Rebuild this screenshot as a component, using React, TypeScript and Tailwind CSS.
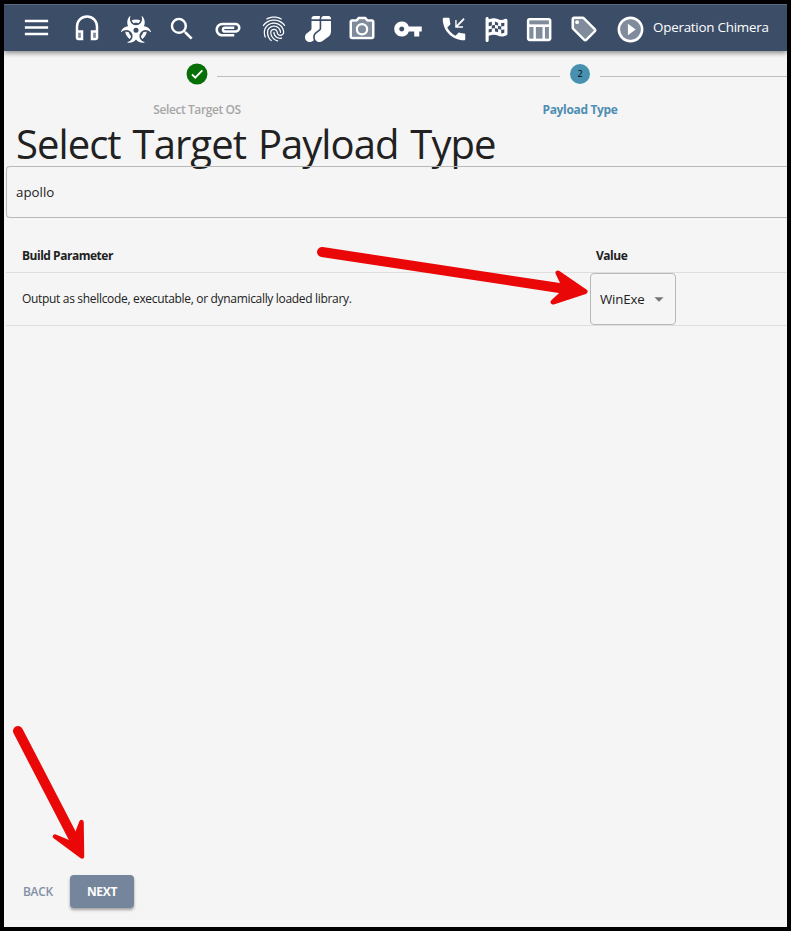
import type { ReactNode } from "react";
import { MdMenu, MdSearch, MdAttachment, MdFingerprint, MdVpnKey, MdArrowDropDown } from "react-icons/md";
import { FaBiohazard, FaSocks, FaFlagCheckered } from "react-icons/fa6";

function TwoTone({ size = 30, className, children }: { size?: number; className?: string; children: ReactNode }) {
  return (
    <svg width={size} height={size} viewBox="0 0 24 24" fill="currentColor" className={`shrink-0 ${className ?? ""}`}>
      {children}
    </svg>
  );
}

function TopBar() {
  return (
    <header className="relative z-10 flex h-[47px] shrink-0 items-center border-t border-[#5c6a80] bg-[#3c4d68] text-white shadow-[0_2px_5px_rgba(0,0,0,0.45)]">
      <MdMenu size={31} className="-mt-[2px] ml-[17px] shrink-0" />
      <TwoTone className="mt-[2px] ml-[20px]">
        <path opacity=".35" d="M5 15h2v4H5zm12 0h2v4h-2z" />
        <path d="M12 1a9 9 0 0 0-9 9v9c0 1.1.9 2 2 2h4v-8H5v-3a7 7 0 0 1 14 0v3h-4v8h4c1.1 0 2-.9 2-2v-9a9 9 0 0 0-9-9zM7 15v4H5v-4h2zm12 4h-2v-4h2v4z" />
      </TwoTone>
      <FaBiohazard className="mt-[2px] ml-[19px] h-[27px] w-[30px] shrink-0" />
      <MdSearch size={30} className="mt-[1px] ml-[16px] shrink-0" />
      <MdAttachment size={30} className="mt-[2px] ml-[16px] shrink-0" />
      <MdFingerprint size={30} className="mt-[2px] ml-[16px] shrink-0" />
      <FaSocks size={26} className="mt-[2px] ml-[16px] shrink-0" />
      <TwoTone className="ml-[16px]">
        <path opacity=".35" d="M4 7h4.05l1.83-2h4.24l1.83 2H20v12H4z" />
        <path d="M20 5h-3.17L15 3H9L7.17 5H4c-1.1 0-2 .9-2 2v12c0 1.1.9 2 2 2h16c1.1 0 2-.9 2-2V7c0-1.1-.9-2-2-2zm0 14H4V7h4.05l1.83-2h4.24l1.83 2H20v12zM12 8a5 5 0 1 0 0 10 5 5 0 0 0 0-10zm0 8.2a3.2 3.2 0 1 1 0-6.4 3.2 3.2 0 0 1 0 6.4z" />
      </TwoTone>
      <MdVpnKey size={30} className="mt-[2px] ml-[16px] shrink-0" />
      <TwoTone className="mt-[2px] ml-[16px]">
        <path d="M20 15.5c-1.25 0-2.45-.2-3.57-.57-.35-.11-.74-.03-1.02.24l-2.2 2.2a15.05 15.05 0 0 1-6.59-6.59l2.2-2.21c.28-.26.36-.65.25-1C8.7 6.45 8.5 5.25 8.5 4c0-.55-.45-1-1-1H4c-.55 0-1 .45-1 1 0 9.39 7.61 17 17 17 .55 0 1-.45 1-1v-3.5c0-.55-.45-1-1-1z" />
        <path d="M19.6 3.2l-5.500 5.500V4.700h-1.100v6.200H19.200v-1.100h-4l5.300-5.500z" />
      </TwoTone>
      <FaFlagCheckered size={25} className="mt-[2px] ml-[15px] shrink-0" />
      <TwoTone size={31} className="mt-[2px] ml-[14px]">
        <path opacity=".35" d="M5 10h3v9H5zm5 0h5v9h-5zm7 0h3v9h-3zM5 5h15v3H5z" />
        <path d="M20 3H5c-1.1 0-2 .9-2 2v14c0 1.1.9 2 2 2h15c1.1 0 2-.9 2-2V5c0-1.1-.9-2-2-2zm0 2v3H5V5h15zm-5 14h-5v-9h5v9zM5 10h3v9H5v-9zm12 9v-9h3v9h-3z" />
      </TwoTone>
      <TwoTone className="mt-[2px] ml-[15px]">
        <path opacity=".35" d="M11 4H4v7l9 9.01L20 13z" />
        <path d="M21.41 11.58l-9-9C12.05 2.22 11.55 2 11 2H4c-1.1 0-2 .9-2 2v7c0 .55.22 1.05.59 1.42l9 9c.36.36.86.58 1.41.58s1.05-.22 1.41-.59l7-7c.37-.36.59-.86.59-1.41s-.23-1.06-.59-1.42zM13 20.01L4 11V4h7v-.01l9 9-7 7.02z" />
        <circle cx="6.5" cy="6.5" r="1.5" />
      </TwoTone>
      <TwoTone size={31} className="mt-[2px] ml-[16px]">
        <circle opacity=".35" cx="12" cy="12" r="8" />
        <path d="M12 2a10 10 0 1 0 0 20 10 10 0 0 0 0-20zm0 18a8 8 0 1 1 0-16 8 8 0 0 1 0 16zM10 16.5l6-4.5-6-4.5z" />
      </TwoTone>
      <span className="-mt-[1px] ml-[7px] text-[13.4px] tracking-[-0.24px] whitespace-nowrap">Operation Chimera</span>
    </header>
  );
}

function Stepper() {
  return (
    <div className="mt-[12px] flex h-[56px] shrink-0">
      <div className="flex w-[386px] shrink-0 flex-col items-center">
        <div className="flex h-[22px] w-full shrink-0 items-center">
          <svg viewBox="0 0 24 24" className="ml-[182px] h-[22px] w-[22px] shrink-0">
            <circle cx="12" cy="12" r="11.4" fill="#067006" />
            <path d="M6.5 12.3l3.6 3.6 7.7-7.8" fill="none" stroke="#fff" strokeWidth="2" />
          </svg>
          <div className="mt-[5px] ml-[9px] h-px flex-1 bg-[#bdbdbd]" />
        </div>
        <span className="mt-[16px] text-[12px] leading-[18px] font-semibold tracking-[-0.42px] text-[#a6a6a6]">Select Target OS</span>
      </div>
      <div className="flex w-[397px] shrink-0 flex-col">
        <div className="flex h-[22px] w-full shrink-0 items-center">
          <div className="mt-[5px] h-px w-[170px] bg-[#bdbdbd]" />
          <div className="ml-[10px] flex h-[20px] w-[20px] items-center justify-center rounded-full bg-[#4790b0] text-[9px] text-black">2</div>
          <div className="mt-[5px] ml-[10px] h-px flex-1 bg-[#bdbdbd]" />
        </div>
        <span className="mt-[16px] w-[380px] text-center text-[12px] leading-[18px] font-bold tracking-[-0.35px] text-[#4f8db3]">Payload Type</span>
      </div>
    </div>
  );
}

function Arrows() {
  return (
    <svg className="pointer-events-none absolute inset-0 z-20 h-[931px] w-[791px]" viewBox="0 0 791 931" fill="#ea0707" stroke="#ea0707" strokeLinecap="round" strokeLinejoin="round">
      <path d="M322 252L566 289" strokeWidth="10" fill="none" />
      <path d="M558 273L585 291.500L553 302L566 290Z" strokeWidth="5" />
      <path d="M18 731L75 841" strokeWidth="10" fill="none" />
      <path d="M81.500 822L82 856.500L55 836.500L73 844Z" strokeWidth="4.500" />
    </svg>
  );
}

export default function App() {
  return (
    <div className="relative flex h-[931px] w-[791px] flex-col overflow-hidden border-4 border-black bg-[#f5f5f5] font-['Open_Sans','Noto_Sans',sans-serif] text-[#212121]">
      <TopBar />
      <Stepper />
      <h1 className="ml-[12px] h-[47px] shrink-0 text-[40px] leading-[49px] font-normal tracking-[-0.95px] whitespace-nowrap [word-spacing:2.5px]">
        Select Target Payload Type
      </h1>
      <div className="ml-[2px] flex h-[52px] shrink-0 items-center rounded-l-[4px] border border-r-0 border-[#b8b8b8] pt-[2px] pl-[9px] text-[13.3px]">
        <span>apollo</span>
      </div>
      <div className="ml-[2px] flex h-[55px] shrink-0 items-end border-b border-[#dedede] pb-[7px] text-[12px] leading-[18px] font-bold tracking-[-0.48px]">
        <span className="ml-[16px] w-[574px]">Build Parameter</span>
        <span>Value</span>
      </div>
      <div className="ml-[2px] flex h-[53px] shrink-0 items-center border-b border-[#dedede]">
        <div className="ml-[16px] w-[568px] text-[12px] tracking-[-0.32px]"><span>Output as shellcode, executable, or dynamically loaded library.</span></div>
        <div className="flex h-[52px] w-[86px] items-center rounded-[4px] border border-[#b8b8b8] pl-[9px] text-[13.3px]">
          <span className="w-[48px] pt-[2px] tracking-[-0.2px]">WinExe</span>
          <MdArrowDropDown size={22} className="shrink-0 text-[#757575]" />
        </div>
      </div>
      <div className="flex-1" />
      <div className="mb-[19px] ml-[19px] flex h-[34px] shrink-0 items-center text-[12px]">
        <button className="w-[47px] pt-[1px] text-left font-semibold tracking-[-0.3px] text-[#8290a4]">BACK</button>
        <button className="h-[33px] w-[64px] rounded-[4px] bg-[#75859b] pt-[2px] font-bold tracking-[-0.3px] text-white shadow-[0_2px_3px_rgba(0,0,0,0.35)]">NEXT</button>
      </div>
      <div className="absolute -top-1 -left-1">
        <Arrows />
      </div>
    </div>
  );
}
